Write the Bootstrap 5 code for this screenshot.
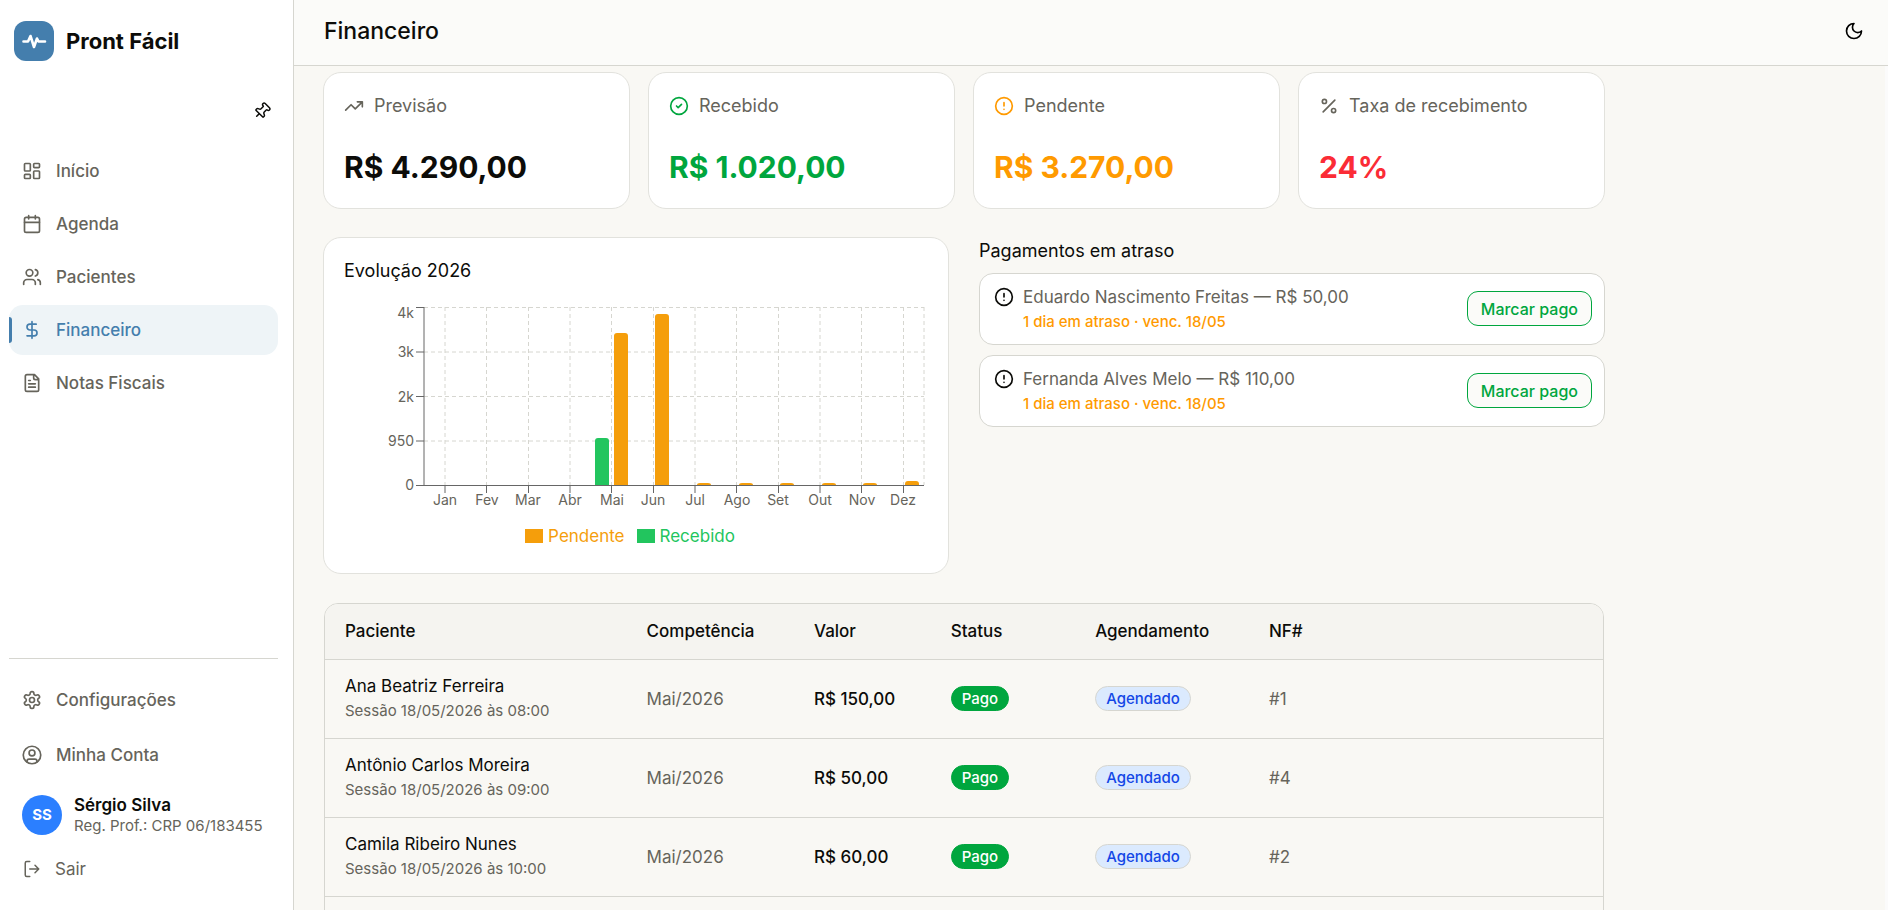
<!DOCTYPE html>
<html lang="pt-BR">
<head>
<meta charset="utf-8">
<meta name="viewport" content="width=device-width, initial-scale=1">
<title>Financeiro · Pront Fácil</title>
<link rel="stylesheet" href="https://cdn.jsdelivr.net/npm/bootstrap@5.3.0/dist/css/bootstrap.min.css">
<style>
:root{--line:#d6d6d0;--page:#f9f8f4;--muted:#66645b;--ink:#0c0c09;--brand:#447ead;--ok:#00a63e;--warn:#ff9a00;--bad:#fb2c36;--bar-due:#f59e0b;--bar-paid:#22c55e}
body{font-family:Inter,"Liberation Sans",sans-serif;font-size:17px;line-height:24px;color:var(--ink);background:var(--page)}
.ico{width:20px;height:20px;flex:none;fill:none;stroke:currentColor;stroke-width:2;stroke-linecap:round;stroke-linejoin:round}
.side{width:294px;background:#fff;border-right:1px solid var(--line);padding:0 15px 0 9px}
.brand-row{padding:21px 5px 0;gap:12px;font-size:22px;font-weight:700}
.brand-logo{width:40px;height:40px;border-radius:12px;background:var(--brand);color:#fff}
.brand-logo .ico{width:26px;height:26px}
.pin-btn{width:36px;height:36px;margin:32px -2px 17px auto;color:var(--ink)}
.pin-btn .ico{width:18px;height:18px}
.side-link{height:50px;padding:0 13px;gap:14px;border-radius:14px;color:var(--muted);font-weight:500;text-decoration:none}
.side-nav{gap:3px}
.side-link.active{background:#eef4f7;color:var(--brand);position:relative}
.side-link.active::before{content:"";position:absolute;left:0;top:12px;bottom:12px;width:3px;border-radius:0 3px 3px 0;background:var(--brand)}
.side-foot{border-top:1px solid var(--line);padding:16px 0 17px}
.side-foot .gap-row{gap:5px}
.avatar{width:40px;height:40px;background:#2b7fff;color:#fff;font-size:15px;font-weight:700}
.user-row{padding:14px 13px 9px;gap:12px}
.user-row strong{font-weight:600;line-height:22px}
.note{font-size:15px;line-height:20px;color:var(--muted)}
.exit-btn{padding:12px 14px;gap:14px;color:var(--muted)}
.exit-btn .ico{width:18px;height:18px}
.plain-btn{border:0;background:none;font-size:17px}
.topbar{height:66px;padding:0 24px 4px 30px;background:#fbfbf9;border-bottom:1px solid var(--line)}
.topbar h1{font-size:23px;font-weight:500;line-height:32px;margin:0}
.page-body{padding:6px 24px 0 29px;border-right:3px solid #fbfbfb}
.page-inner{max-width:1282px}
.panel{background:#fff;border:1px solid #e2e2dd;border-radius:18px;padding:20px}
.stat-row{--bs-gutter-x:18px}
.stat{height:137px;padding:21px 20px}
.stat-label{gap:10px;color:var(--muted);font-size:18px;line-height:24px}
.stat-value{font-size:30px;font-weight:700;line-height:36px;margin-top:31px}
.tone-ok{color:var(--ok)}.tone-warn{color:var(--warn)}.tone-bad{color:var(--bad)}
.split{--bs-gutter-x:30px;margin-top:28px;margin-bottom:29px}
h2{font-size:18px;font-weight:400;line-height:26px;margin:0}
.due-title{padding:1px 0 9px}
.chart-panel{height:337px}
.chart{display:block;width:100%;margin-top:17px;font-size:14px}
.legend-row{gap:12px;padding-right:12px;margin-top:13px}
.key-due{color:var(--bar-due)}.key-paid{color:var(--bar-paid)}
.swatch{width:18px;height:14px;margin-right:5px;background:currentColor}
.due{border:1px solid var(--line);border-radius:14px;background:#fff;height:72px;padding:11px 12px 0 14px;margin-bottom:10px;gap:9px}
.due .amount{color:var(--muted)}
.due small{display:block;margin-top:1px;font-size:15px;font-weight:500;line-height:24px;color:var(--warn)}
.due .ico{margin:2px 0 0}
.pay-btn{height:35px;margin-top:6px;padding:0 13px;border:1px solid var(--ok);border-radius:11px;background:#fbfbf9;color:var(--ok);font-size:16px;font-weight:500}
.sheet{border:1px solid var(--line);border-radius:14px;overflow:hidden;margin:0 1px}
.sheet table{table-layout:fixed;width:100%}
.sheet th{height:55px;padding:0 20px;font-weight:500;background:#f5f4f0;border-bottom:1px solid var(--line)}
.sheet td{height:79px;padding:0 20px;border-bottom:1px solid var(--line);color:var(--muted)}
.sheet td.strong-cell{color:var(--ink);font-weight:500}
.sheet .who{color:var(--ink)}
.sheet .note{line-height:25px}
.pill{display:inline-block;height:25px;border:1px solid var(--ok);border-radius:13px;padding:0 10px;font-size:15px;line-height:23px;font-weight:500;vertical-align:middle;background:var(--ok);color:#fff}
.pill-blue{background:#dbeafe;border-color:var(--line);color:#1447e6}
.c1{width:23.6%}.c2{width:13.1%}.c3{width:10.7%}.c4{width:11.3%}.c5{width:13.6%}
</style>
</head>
<body>
<div class="d-flex vh-100 overflow-hidden">
  <aside class="side d-flex flex-column flex-shrink-0">
    <div class="brand-row d-flex align-items-center">
      <span class="brand-logo d-flex align-items-center justify-content-center"><svg class="ico" viewBox="0 0 26 26"><path d="M2.500 13.500h4.500l2.500-5.500 3.500 11 3-8.500 1.500 3h6.500" stroke-width="2.600"/></svg></span>
      <span>Pront Fácil</span>
    </div>
    <button class="pin-btn plain-btn d-flex align-items-center justify-content-center p-0" aria-label="Fixar menu"><svg class="ico" viewBox="0 0 24 24"><g transform="rotate(45 12 12)"><path d="M12 17v5M9 10.760a2 2 0 0 1-1.110 1.790l-1.780.9A2 2 0 0 0 5 15.240V16a1 1 0 0 0 1 1h12a1 1 0 0 0 1-1v-.760a2 2 0 0 0-1.110-1.790l-1.780-.9A2 2 0 0 1 15 10.760V7a1 1 0 0 1 1-1 2 2 0 0 0 0-4H8a2 2 0 0 0 0 4 1 1 0 0 1 1 1z"/></g></svg></button>
    <nav class="side-nav d-flex flex-column">
      <a href="#" class="side-link d-flex align-items-center"><svg class="ico" viewBox="0 0 24 24"><rect x="3" y="3" width="7" height="9" rx="1"/><rect x="14" y="3" width="7" height="5" rx="1"/><rect x="14" y="12" width="7" height="9" rx="1"/><rect x="3" y="16" width="7" height="5" rx="1"/></svg>Início</a>
      <a href="#" class="side-link d-flex align-items-center"><svg class="ico" viewBox="0 0 24 24"><path d="M8 2v4M16 2v4M3 10h18"/><rect x="3" y="4" width="18" height="18" rx="2"/></svg>Agenda</a>
      <a href="#" class="side-link d-flex align-items-center"><svg class="ico" viewBox="0 0 24 24"><path d="M16 21v-2a4 4 0 0 0-4-4H6a4 4 0 0 0-4 4v2M22 21v-2a4 4 0 0 0-3-3.870M16 3.130a4 4 0 0 1 0 7.750"/><circle cx="9" cy="7" r="4"/></svg>Pacientes</a>
      <a href="#" class="side-link active d-flex align-items-center" aria-current="page"><svg class="ico" viewBox="0 0 24 24"><path d="M12 2v20M17 5H9.500a3.500 3.500 0 0 0 0 7h5a3.500 3.500 0 0 1 0 7H6"/></svg>Financeiro</a>
      <a href="#" class="side-link d-flex align-items-center"><svg class="ico" viewBox="0 0 24 24"><path d="M15 2H6a2 2 0 0 0-2 2v16a2 2 0 0 0 2 2h12a2 2 0 0 0 2-2V7ZM14 2v4a2 2 0 0 0 2 2h4M10 9H8M16 13H8M16 17H8"/></svg>Notas Fiscais</a>
    </nav>
    <div class="side-foot mt-auto">
      <div class="gap-row d-flex flex-column">
        <a href="#" class="side-link d-flex align-items-center"><svg class="ico" viewBox="0 0 24 24"><path d="M12.220 2h-.440a2 2 0 0 0-2 2v.180a2 2 0 0 1-1 1.730l-.430.250a2 2 0 0 1-2 0l-.150-.080a2 2 0 0 0-2.730.730l-.220.380a2 2 0 0 0 .730 2.730l.150.100a2 2 0 0 1 1 1.720v.510a2 2 0 0 1-1 1.740l-.150.090a2 2 0 0 0-.730 2.730l.220.380a2 2 0 0 0 2.730.730l.150-.080a2 2 0 0 1 2 0l.430.250a2 2 0 0 1 1 1.730V20a2 2 0 0 0 2 2h.440a2 2 0 0 0 2-2v-.180a2 2 0 0 1 1-1.730l.430-.250a2 2 0 0 1 2 0l.150.080a2 2 0 0 0 2.730-.730l.220-.390a2 2 0 0 0-.730-2.730l-.150-.080a2 2 0 0 1-1-1.740v-.500a2 2 0 0 1 1-1.740l.150-.090a2 2 0 0 0 .730-2.730l-.220-.380a2 2 0 0 0-2.730-.730l-.150.080a2 2 0 0 1-2 0l-.430-.250a2 2 0 0 1-1-1.730V4a2 2 0 0 0-2-2z"/><circle cx="12" cy="12" r="3"/></svg>Configurações</a>
        <a href="#" class="side-link d-flex align-items-center"><svg class="ico" viewBox="0 0 24 24"><circle cx="12" cy="12" r="10.500"/><circle cx="12" cy="9.500" r="3.500"/><path d="M6 20.500v-1a2.500 2.500 0 0 1 2.500-2.500h7a2.500 2.500 0 0 1 2.500 2.500v1"/></svg>Minha Conta</a>
      </div>
      <div class="user-row d-flex align-items-center">
        <span class="avatar rounded-circle d-flex align-items-center justify-content-center">SS</span>
        <span class="d-flex flex-column"><strong>Sérgio Silva</strong><span class="note text-nowrap">Reg. Prof.: CRP 06/183455</span></span>
      </div>
      <button class="exit-btn plain-btn d-flex align-items-center"><svg class="ico" viewBox="0 0 24 24"><path d="M9 22H5a2 2 0 0 1-2-2V4a2 2 0 0 1 2-2h4M16 17l5-5-5-5M21 12H9"/></svg>Sair</button>
    </div>
  </aside>

  <main class="flex-grow-1 overflow-hidden">
    <header class="topbar d-flex align-items-center justify-content-between">
      <h1>Financeiro</h1>
      <button class="plain-btn p-0 d-flex" aria-label="Alternar tema"><svg class="ico" viewBox="0 0 24 24"><path d="M12 3a6 6 0 0 0 9 9 9 9 0 1 1-9-9Z"/></svg></button>
    </header>
    <div class="page-body">
      <div class="page-inner">
        <div class="row stat-row">
          <div class="col-3"><section class="panel stat">
            <div class="stat-label d-flex align-items-center"><svg class="ico" viewBox="0 0 24 24"><path d="m22 7-8.500 8.500-5-5L2 17M16 7h6v6"/></svg>Previsão</div>
            <div class="stat-value">R$ 4.290,00</div></section></div>
          <div class="col-3"><section class="panel stat">
            <div class="stat-label d-flex align-items-center"><svg class="ico tone-ok" viewBox="0 0 24 24"><circle cx="12" cy="12" r="10"/><path d="m9 12 2 2 4-4"/></svg>Recebido</div>
            <div class="stat-value tone-ok">R$ 1.020,00</div></section></div>
          <div class="col-3"><section class="panel stat">
            <div class="stat-label d-flex align-items-center"><svg class="ico tone-warn" viewBox="0 0 24 24"><circle cx="12" cy="12" r="10"/><path d="M12 8v4M12 16h.010"/></svg>Pendente</div>
            <div class="stat-value tone-warn">R$ 3.270,00</div></section></div>
          <div class="col-3"><section class="panel stat">
            <div class="stat-label d-flex align-items-center"><svg class="ico" viewBox="0 0 24 24"><path d="M19 5 5 19"/><circle cx="6.500" cy="6.500" r="2.500"/><circle cx="17.500" cy="17.500" r="2.500"/></svg>Taxa de recebimento</div>
            <div class="stat-value tone-bad">24%</div></section></div>
        </div>

        <div class="row split">
          <div class="col-6"><section class="panel chart-panel">
            <h2>Evolução 2026</h2>
            <svg class="chart" viewBox="0 0 584 210" role="img" aria-label="Pendente e recebido por mês">
              <path d="M80 6.500H580M80 51H580M80 95.500H580M80 140H580M101 6v178M142.500 6v178M184.500 6v178M226 6v178M267.500 6v178M309.500 6v178M351 6v178M392.500 6v178M434.500 6v178M476 6v178M517.500 6v178M559.500 6v178M580 6v178" fill="none" stroke="#d6d6d0" stroke-dasharray="4 3"/>
              <path d="M251 184v-44q0-3 3-3h8q3 0 3 3v44z" fill="#22c55e"/>
              <path d="M270 184V35q0-3 3-3h8q3 0 3 3v149zM311 184V16q0-3 3-3h8q3 0 3 3v168zM353 184q0-2 3-2h8q3 0 3 2zM395 184q0-2 3-2h8q3 0 3 2zM436 184q0-2 3-2h8q3 0 3 2zM478 184q0-2 3-2h8q3 0 3 2zM519 184q0-2 3-2h8q3 0 3 2zM561 184v-1q0-3 3-3h8q3 0 3 3v1z" fill="#f59e0b"/>
              <path d="M80 6v179M80 184.500H580M72 6.500h8M72 51h8M72 95.500h8M72 140h8M72 184.500h8M101 185v7M142.500 185v7M184.500 185v7M226 185v7M267.500 185v7M309.500 185v7M351 185v7M392.500 185v7M434.500 185v7M476 185v7M517.500 185v7M559.500 185v7" fill="none" stroke="#666"/>
              <g text-anchor="end" fill="#66645b"><text x="70" y="17">4k</text><text x="70" y="56">3k</text><text x="70" y="101">2k</text><text x="70" y="145">950</text><text x="70" y="189">0</text></g>
              <g text-anchor="middle" fill="#66645b"><text x="101" y="204">Jan</text><text x="143" y="204">Fev</text><text x="184" y="204">Mar</text><text x="226" y="204">Abr</text><text x="268" y="204">Mai</text><text x="309" y="204">Jun</text><text x="351" y="204">Jul</text><text x="393" y="204">Ago</text><text x="434" y="204">Set</text><text x="476" y="204">Out</text><text x="518" y="204">Nov</text><text x="559" y="204">Dez</text></g>
            </svg>
            <div class="legend-row d-flex justify-content-center">
              <span class="key-due d-flex align-items-center"><i class="swatch"></i>Pendente</span>
              <span class="key-paid d-flex align-items-center"><i class="swatch"></i>Recebido</span>
            </div>
          </section></div>
          <div class="col-6">
            <h2 class="due-title">Pagamentos em atraso</h2>
            <article class="due d-flex align-items-start">
              <svg class="ico" viewBox="0 0 24 24"><circle cx="12" cy="12" r="10"/><path d="M12 8v4M12 16h.010"/></svg>
              <div class="flex-grow-1"><span class="amount">Eduardo Nascimento Freitas — R$ 50,00</span><small>1 dia em atraso · venc. 18/05</small></div>
              <button class="pay-btn">Marcar pago</button>
            </article>
            <article class="due d-flex align-items-start">
              <svg class="ico" viewBox="0 0 24 24"><circle cx="12" cy="12" r="10"/><path d="M12 8v4M12 16h.010"/></svg>
              <div class="flex-grow-1"><span class="amount">Fernanda Alves Melo — R$ 110,00</span><small>1 dia em atraso · venc. 18/05</small></div>
              <button class="pay-btn">Marcar pago</button>
            </article>
          </div>
        </div>

        <div class="sheet">
          <table>
            <thead><tr><th class="c1">Paciente</th><th class="c2">Competência</th><th class="c3">Valor</th><th class="c4">Status</th><th class="c5">Agendamento</th><th>NF#</th></tr></thead>
            <tbody>
              <tr><td><div class="who">Ana Beatriz Ferreira</div><div class="note">Sessão 18/05/2026 às 08:00</div></td><td>Mai/2026</td><td class="strong-cell">R$ 150,00</td><td><span class="pill">Pago</span></td><td><span class="pill pill-blue">Agendado</span></td><td>#1</td></tr>
              <tr><td><div class="who">Antônio Carlos Moreira</div><div class="note">Sessão 18/05/2026 às 09:00</div></td><td>Mai/2026</td><td class="strong-cell">R$ 50,00</td><td><span class="pill">Pago</span></td><td><span class="pill pill-blue">Agendado</span></td><td>#4</td></tr>
              <tr><td><div class="who">Camila Ribeiro Nunes</div><div class="note">Sessão 18/05/2026 às 10:00</div></td><td>Mai/2026</td><td class="strong-cell">R$ 60,00</td><td><span class="pill">Pago</span></td><td><span class="pill pill-blue">Agendado</span></td><td>#2</td></tr>
              <tr><td colspan="6"></td></tr>
            </tbody>
          </table>
        </div>
      </div>
    </div>
  </main>
</div>
<script src="https://cdn.jsdelivr.net/npm/bootstrap@5.3.0/dist/js/bootstrap.bundle.min.js"></script>
</body>
</html>
